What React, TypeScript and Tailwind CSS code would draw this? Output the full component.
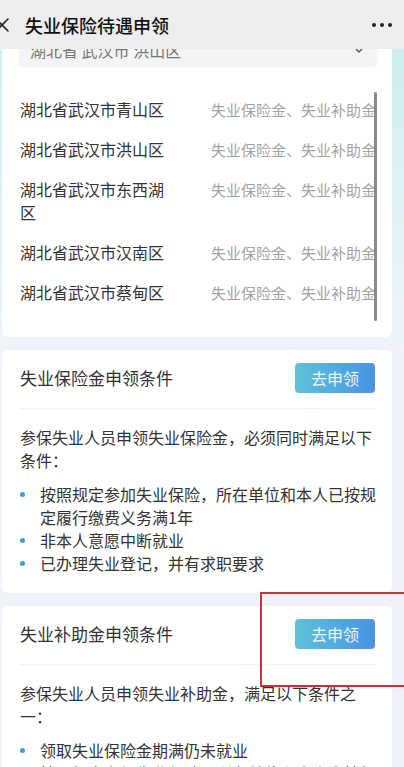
import React from "react";

type Area = {
  name: string;
  benefits: string;
};

const areas: Area[] = [
  { name: "湖北省武汉市青山区", benefits: "失业保险金、失业补助金" },
  { name: "湖北省武汉市洪山区", benefits: "失业保险金、失业补助金" },
  { name: "湖北省武汉市东西湖区", benefits: "失业保险金、失业补助金" },
  { name: "湖北省武汉市汉南区", benefits: "失业保险金、失业补助金" },
  { name: "湖北省武汉市蔡甸区", benefits: "失业保险金、失业补助金" },
];

type Condition = {
  title: string;
  intro: string;
  items: string[];
};

const conditions: Condition[] = [
  {
    title: "失业保险金申领条件",
    intro: "参保失业人员申领失业保险金，必须同时满足以下条件：",
    items: [
      "按照规定参加失业保险，所在单位和本人已按规定履行缴费义务满1年",
      "非本人意愿中断就业",
      "已办理失业登记，并有求职要求",
    ],
  },
  {
    title: "失业补助金申领条件",
    intro: "参保失业人员申领失业补助金，满足以下条件之一：",
    items: [
      "领取失业保险金期满仍未就业",
      "按照规定参加失业保险，所在单位和本人未按规定履行缴费义务满1年",
    ],
  },
];

const font = { fontFamily: '"Noto Sans CJK SC", "Noto Sans", sans-serif' };

function TopBar() {
  return (
    <header className="absolute left-0 right-0 top-0 z-10 flex h-[49px] items-center bg-[#ededed]">
      <svg width="16" height="16" viewBox="0 0 16 16" className="-ml-[6px]">
        <path d="M2 2 L14 14 M14 2 L2 14" stroke="#222" strokeWidth="1.6" strokeLinecap="round" />
      </svg>
      <h1 className="ml-[15px] text-[18px] font-medium leading-none text-[#111]">失业保险待遇申领</h1>
      <div className="ml-auto mr-[12px] flex gap-[4px]">
        <span className="h-[4px] w-[4px] rounded-full bg-[#222]" />
        <span className="h-[4px] w-[4px] rounded-full bg-[#222]" />
        <span className="h-[4px] w-[4px] rounded-full bg-[#222]" />
      </div>
    </header>
  );
}

function AreaCard() {
  return (
    <section className="ml-[2px] w-[390px] rounded-[6px] bg-white pb-[16px] pl-[17px] pr-[15px] pt-[14px]">
      <div className="flex h-[40px] items-end justify-between rounded-[4px] bg-[#f3f4f5] pl-[11px] pr-[14px] shadow-[0_1px_2px_rgba(0,0,0,0.06)]">
        <span className="pb-[6px] text-[16px] leading-[20px] text-[#777]">湖北省 武汉市 洪山区</span>
        <svg width="8" height="6" viewBox="0 0 8 6" className="mb-[12px]">
          <path d="M1 1 L4 4 L7 1" stroke="#555" strokeWidth="1.4" fill="none" />
        </svg>
      </div>
      <div className="mt-[26px] flex w-[358px]">
        <div className="w-[355px] overflow-hidden pl-[1px] pt-[6px]">
          {areas.map((area) => (
            <div key={area.name} className="flex pb-[17px]">
              <p className="w-[150px] shrink-0 text-[16px] leading-[23px] text-[#333]">{area.name}</p>
              <p className="ml-[41px] whitespace-nowrap text-[15px] leading-[23px] text-[#a3a3a3]">{area.benefits}</p>
            </div>
          ))}
        </div>
        <div className="w-[3px] rounded-full bg-[#8a8a8a]" />
      </div>
    </section>
  );
}

function ConditionCard({ condition }: { condition: Condition }) {
  return (
    <section className="ml-[2px] mt-[13px] w-[390px] rounded-[6px] bg-white pb-[18px] pl-[18px] pr-[17px] pt-[13px]">
      <div className="flex items-center justify-between border-b border-[#f0f0f0] pb-[15px]">
        <h2 className="text-[17px] leading-[30px] text-[#333]">{condition.title}</h2>
        <button className="h-[30px] w-[80px] rounded-[4px] bg-gradient-to-r from-[#5fc2d9] to-[#4a92e3] text-[16px] text-white/90">
          去申领
        </button>
      </div>
      <p className="mt-[17px] text-[16px] leading-[23px] text-[#333]">{condition.intro}</p>
      <ul className="-mr-[6px] mt-[11px]">
        {condition.items.map((item) => (
          <li key={item} className="flex text-[16px] leading-[23px] text-[#333]">
            <span className="mt-[9px] h-[5px] w-[5px] shrink-0 rounded-full bg-[#3d9dd8]" />
            <span className="ml-[15px]">{item}</span>
          </li>
        ))}
      </ul>
    </section>
  );
}

export default function App() {
  return (
    <div
      className="relative h-[767px] w-[404px] overflow-hidden bg-gradient-to-b from-[#c8eef0] via-[#eef4fa] via-45% to-[#eef3f9]"
      style={font}
    >
      <TopBar />
      <main className="pt-[12px]">
        <AreaCard />
        {conditions.map((condition) => (
          <ConditionCard key={condition.title} condition={condition} />
        ))}
      </main>
      {/* highlight frame around the second apply button */}
      <div className="pointer-events-none absolute left-[260px] top-[592px] h-[95px] w-[160px] border-[2px] border-[#cf2e3a]" />
    </div>
  );
}
